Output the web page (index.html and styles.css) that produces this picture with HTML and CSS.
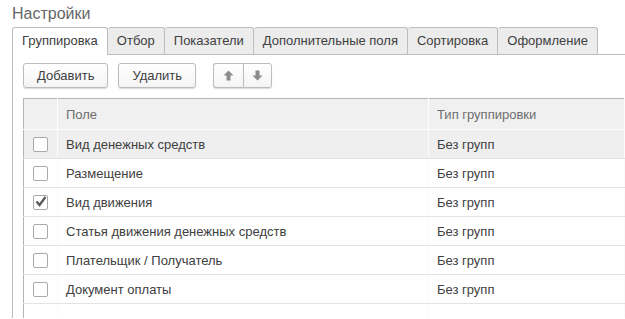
FILE: index.html
```html
<!DOCTYPE html>
<html lang="ru">
<head>
  <meta charset="UTF-8">
  <title>Настройки</title>
  <link rel="stylesheet" href="styles.css">
</head>
<body>
  <div class="settings">
    <h1>Настройки</h1>

    <div class="tabs">
      <div class="tab active">Группировка</div>
      <div class="tab">Отбор</div>
      <div class="tab">Показатели</div>
      <div class="tab">Дополнительные поля</div>
      <div class="tab">Сортировка</div>
      <div class="tab">Оформление</div>
    </div>

    <div class="panel">
      <div class="toolbar">
        <button class="btn">Добавить</button>
        <button class="btn">Удалить</button>
        <div class="btn-group">
          <button class="btn icon-btn" title="Вверх">
            <svg width="11" height="11" viewBox="0 0 11 11"><path d="M5.5 0.5 L10.5 5.5 L7.5 5.5 L7.5 10.5 L3.5 10.5 L3.5 5.5 L0.5 5.5 Z" fill="#8c8c8c"/></svg>
          </button>
          <button class="btn icon-btn" title="Вниз">
            <svg width="11" height="11" viewBox="0 0 11 11"><path d="M5.5 10.5 L10.5 5.5 L7.5 5.5 L7.5 0.5 L3.5 0.5 L3.5 5.5 L0.5 5.5 Z" fill="#8c8c8c"/></svg>
          </button>
        </div>
      </div>

      <table class="grid">
        <thead>
          <tr>
            <th class="col-check"></th>
            <th class="col-field">Поле</th>
            <th>Тип группировки</th>
          </tr>
        </thead>
        <tbody>
          <tr class="current">
            <td class="col-check"><span class="check"></span></td>
            <td>Вид денежных средств</td>
            <td>Без групп</td>
          </tr>
          <tr>
            <td class="col-check"><span class="check"></span></td>
            <td>Размещение</td>
            <td>Без групп</td>
          </tr>
          <tr>
            <td class="col-check">
              <span class="check">
                <svg width="14" height="14" viewBox="0 0 14 14"><path d="M2.5 6.5 L5.5 10 L11.5 2" fill="none" stroke="#5c5c5c" stroke-width="2.4"/></svg>
              </span>
            </td>
            <td>Вид движения</td>
            <td>Без групп</td>
          </tr>
          <tr>
            <td class="col-check"><span class="check"></span></td>
            <td>Статья движения денежных средств</td>
            <td>Без групп</td>
          </tr>
          <tr>
            <td class="col-check"><span class="check"></span></td>
            <td>Плательщик / Получатель</td>
            <td>Без групп</td>
          </tr>
          <tr>
            <td class="col-check"><span class="check"></span></td>
            <td>Документ оплаты</td>
            <td>Без групп</td>
          </tr>
          <tr class="empty">
            <td class="col-check"></td>
            <td></td>
            <td></td>
          </tr>
        </tbody>
      </table>
    </div>
  </div>
</body>
</html>
```

FILE: styles.css
```css
html, body {
  margin: 0;
  padding: 0;
}
body {
  font-family: "Liberation Sans", Arial, sans-serif;
  font-size: 13px;
  color: #404040;
  background-color: #fff;
}
.settings {
  padding: 4px 0 0 12px;
}
h1 {
  margin: 0 0 3px;
  font-size: 16px;
  font-weight: normal;
  line-height: 20px;
  color: #666;
}
.tabs {
  display: flex;
  height: 27px;
  border-bottom: 1px solid #bdbdbd;
}
.tab {
  height: 26px;
  line-height: 26px;
  padding: 0 9px;
  background-color: #ececec;
  border: 1px solid #bdbdbd;
  border-left: none;
  border-bottom: none;
  border-radius: 3px 3px 0 0;
}
.tab.active {
  height: 27px;
  background-color: #fff;
  border-left: 1px solid #bdbdbd;
  margin-bottom: -1px;
}
.panel {
  border-left: 1px solid #bdbdbd;
  padding: 8px 0 0 10px;
}
.toolbar {
  display: flex;
  height: 25px;
}
.btn {
  height: 25px;
  padding: 0 13px;
  font-family: inherit;
  font-size: 13px;
  color: #404040;
  background: linear-gradient(#fff, #f4f4f4);
  border: 1px solid #bcbcbc;
  border-radius: 3px;
  box-shadow: 0 1px 1px rgba(0, 0, 0, 0.15);
  margin-right: 10px;
}
.btn-group {
  display: flex;
  margin-left: 7px;
}
.icon-btn {
  width: 30px;
  padding: 0;
  margin: 0;
  display: flex;
  align-items: center;
  justify-content: center;
}
.btn-group .icon-btn:first-child {
  border-radius: 3px 0 0 3px;
  border-right: none;
}
.btn-group .icon-btn:last-child {
  width: 29px;
  border-radius: 0 3px 3px 0;
}
.grid {
  margin-top: 10px;
  border-collapse: collapse;
  width: 100%;
  border-top: 1px solid #b5b5b5;
  border-left: 1px solid #b5b5b5;
}
.grid th {
  height: 30px;
  padding: 0 0 0 8px;
  text-align: left;
  font-weight: normal;
  color: #6e6e6e;
  background-color: #f0f0f0;
  border-right: 1px solid #fbfbfb;
  border-bottom: 1px solid #fbfbfb;
}
.grid td {
  height: 28px;
  padding: 0 0 0 8px;
  border-right: 1px solid #fbfbfb;
  border-bottom: 1px solid #e3e3e3;
}
.grid .col-check {
  width: 33px;
  padding: 0;
  text-align: center;
}
.grid .col-field {
  width: 362px;
}
.grid tr.current td {
  background-color: #efefef;
}
.grid tr.empty td {
  height: 14px;
  border-bottom: none;
}
.check {
  display: inline-block;
  width: 13px;
  height: 13px;
  border: 1px solid #a9a9a9;
  border-radius: 2px;
  background-color: #fff;
  vertical-align: middle;
  position: relative;
}
.check svg {
  position: absolute;
  left: 0;
  top: -1px;
}
```
